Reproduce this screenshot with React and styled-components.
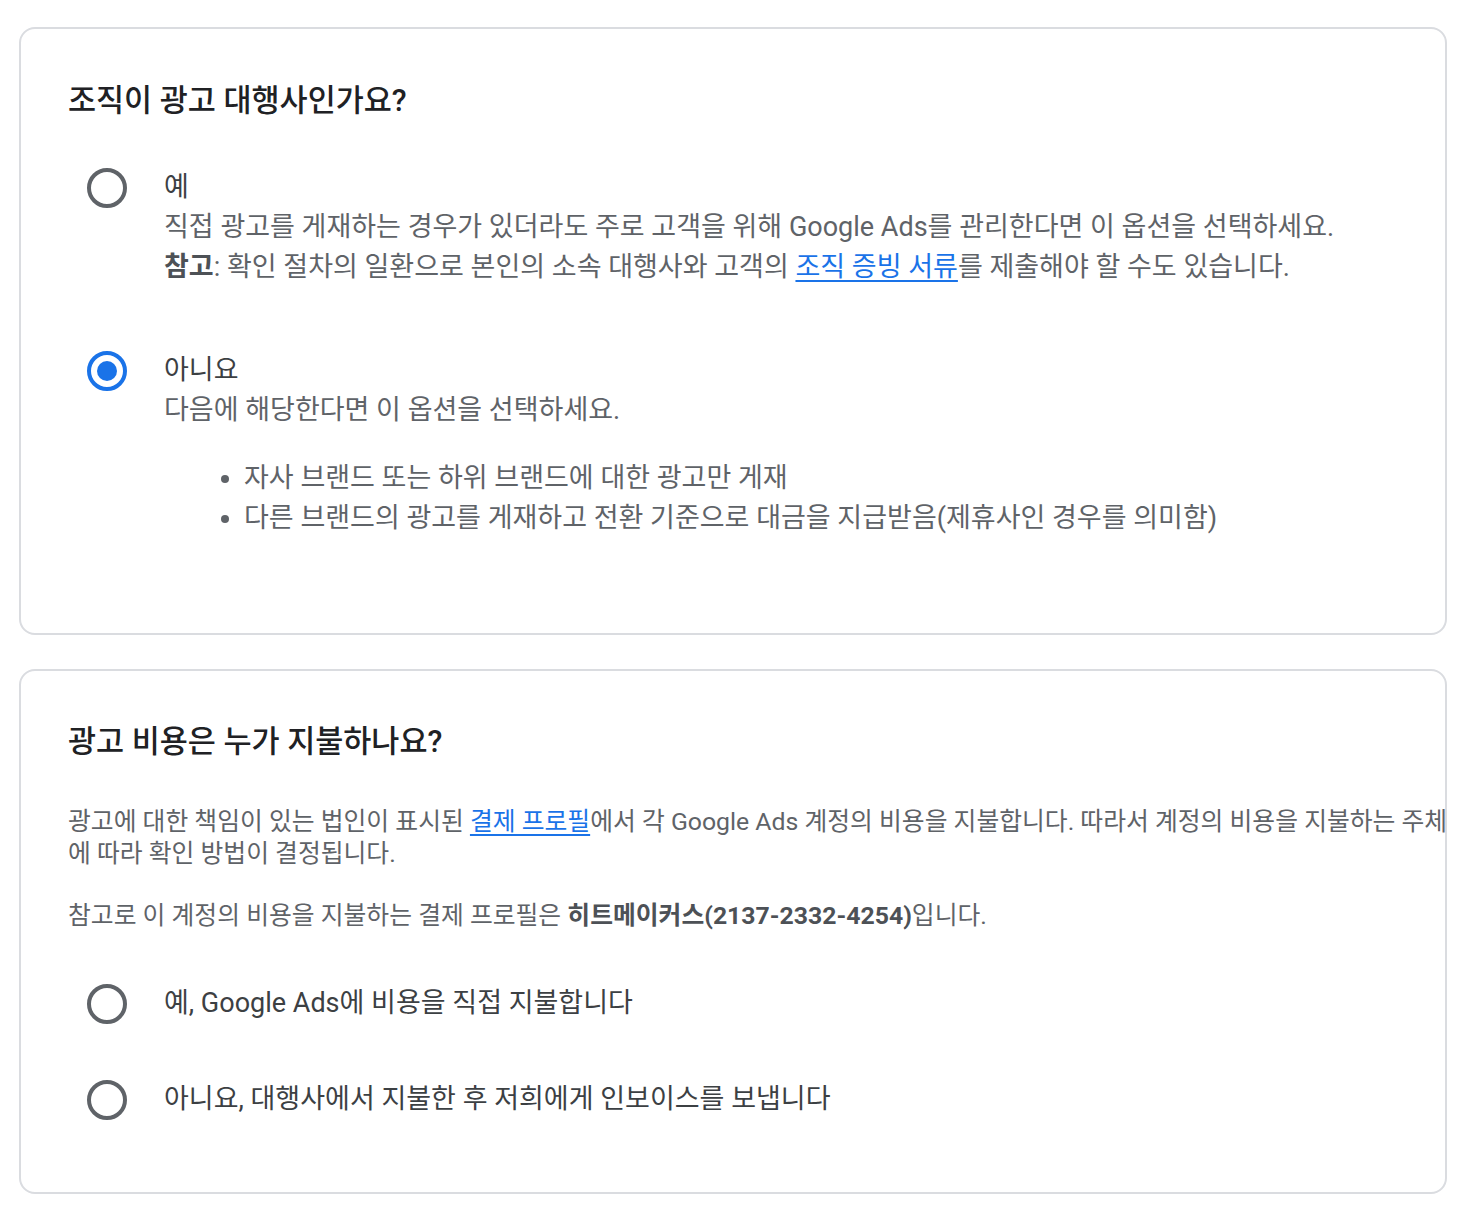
import React from "react";
import styled, { createGlobalStyle } from "styled-components";

const GlobalStyle = createGlobalStyle`
  body {
    margin: 0;
    background: #ffffff;
    font-family: Roboto, "Noto Sans CJK KR", sans-serif;
    color: #3c4043;
  }
`;

export default function App() {
  return (
    <Page>
      <GlobalStyle />
      <Card $top={52} $bottom={95}>
        <Title>조직이 광고 대행사인가요?</Title>
        <OptionList $gap={63} $top={46}>
          <Option>
            <Radio />
            <OptionBody>
              <Label>예</Label>
              <Desc>
                직접 광고를 게재하는 경우가 있더라도 주로 고객을 위해 Google Ads를 관리한다면 이 옵션을 선택하세요.
              </Desc>
              <Desc>
                <Strong>참고</Strong>: 확인 절차의 일환으로 본인의 소속 대행사와 고객의{" "}
                <Link>조직 증빙 서류</Link>를 제출해야 할 수도 있습니다.
              </Desc>
            </OptionBody>
          </Option>
          <Option>
            <Radio $checked />
            <OptionBody>
              <Label>아니요</Label>
              <Desc>다음에 해당한다면 이 옵션을 선택하세요.</Desc>
              <Bullets>
                <li>자사 브랜드 또는 하위 브랜드에 대한 광고만 게재</li>
                <li>다른 브랜드의 광고를 게재하고 전환 기준으로 대금을 지급받음(제휴사인 경우를 의미함)</li>
              </Bullets>
            </OptionBody>
          </Option>
        </OptionList>
      </Card>

      <Card $top={51} $bottom={72}>
        <Title>광고 비용은 누가 지불하나요?</Title>
        <Para $top={44}>
          광고에 대한 책임이 있는 법인이 표시된 <Link>결제 프로필</Link>에서 각 Google Ads 계정의 비용을 지불합니다. 따라서 계정의 비용을 지불하는 주체
          <br />
          에 따라 확인 방법이 결정됩니다.
        </Para>
        <Para $top={30}>
          참고로 이 계정의 비용을 지불하는 결제 프로필은 <Strong>히트메이커스(2137-2332-4254)</Strong>입니다.
        </Para>
        <OptionList $gap={55} $top={51}>
          <Option>
            <Radio />
            <OptionBody>
              <Label>예, Google Ads에 비용을 직접 지불합니다</Label>
            </OptionBody>
          </Option>
          <Option>
            <Radio />
            <OptionBody>
              <Label>아니요, 대행사에서 지불한 후 저희에게 인보이스를 보냅니다</Label>
            </OptionBody>
          </Option>
        </OptionList>
      </Card>
    </Page>
  );
}

const Page = styled.div`
  display: flex;
  flex-direction: column;
  gap: 34px;
  padding: 27px 35px 23px 19px;
`;

const Card = styled.section`
  border: 2px solid #dadce0;
  border-radius: 16px;
  padding: ${(p) => p.$top}px 48px ${(p) => p.$bottom}px 47px;
`;

const Title = styled.h2`
  margin: 0;
  font-size: 30.5px;
  line-height: 40px;
  font-weight: 500;
  color: #202124;
`;

const OptionList = styled.div`
  display: flex;
  flex-direction: column;
  gap: ${(p) => p.$gap}px;
  margin-top: ${(p) => p.$top}px;
`;

const Option = styled.div`
  display: flex;
  align-items: flex-start;
`;

const Radio = styled.span`
  box-sizing: border-box;
  flex: none;
  display: flex;
  align-items: center;
  justify-content: center;
  width: 40px;
  height: 40px;
  margin: 1px 37px 0 19px;
  border-radius: 50%;
  border: 4px solid ${(p) => (p.$checked ? "#1a73e8" : "#5f6368")};

  &::after {
    content: "";
    display: ${(p) => (p.$checked ? "block" : "none")};
    width: 20px;
    height: 20px;
    border-radius: 50%;
    background: #1a73e8;
  }
`;

const OptionBody = styled.div`
  display: flex;
  flex-direction: column;
  min-width: 0;
`;

const Label = styled.div`
  font-size: 27px;
  line-height: 40px;
  color: #3c4043;
`;

const Desc = styled.div`
  font-size: 27px;
  line-height: 40px;
  color: #5f6368;
`;

const Strong = styled.b`
  font-weight: 700;
  color: #4d5156;
`;

const Link = styled.a`
  color: #1a73e8;
  text-decoration: underline;
  text-underline-offset: 4px;
  cursor: pointer;
`;

const Bullets = styled.ul`
  margin: 28px 0 0;
  padding: 0 0 0 80px;
  list-style: none;

  li {
    position: relative;
    font-size: 27px;
    line-height: 40px;
    color: #5f6368;
  }

  li::before {
    content: "";
    position: absolute;
    left: -23px;
    top: 17px;
    width: 8px;
    height: 8px;
    border-radius: 50%;
    background: #5f6368;
  }
`;

const Para = styled.p`
  margin: ${(p) => p.$top}px -70px 0 0;
  font-size: 24.8px;
  line-height: 32px;
  color: #5f6368;
`;
